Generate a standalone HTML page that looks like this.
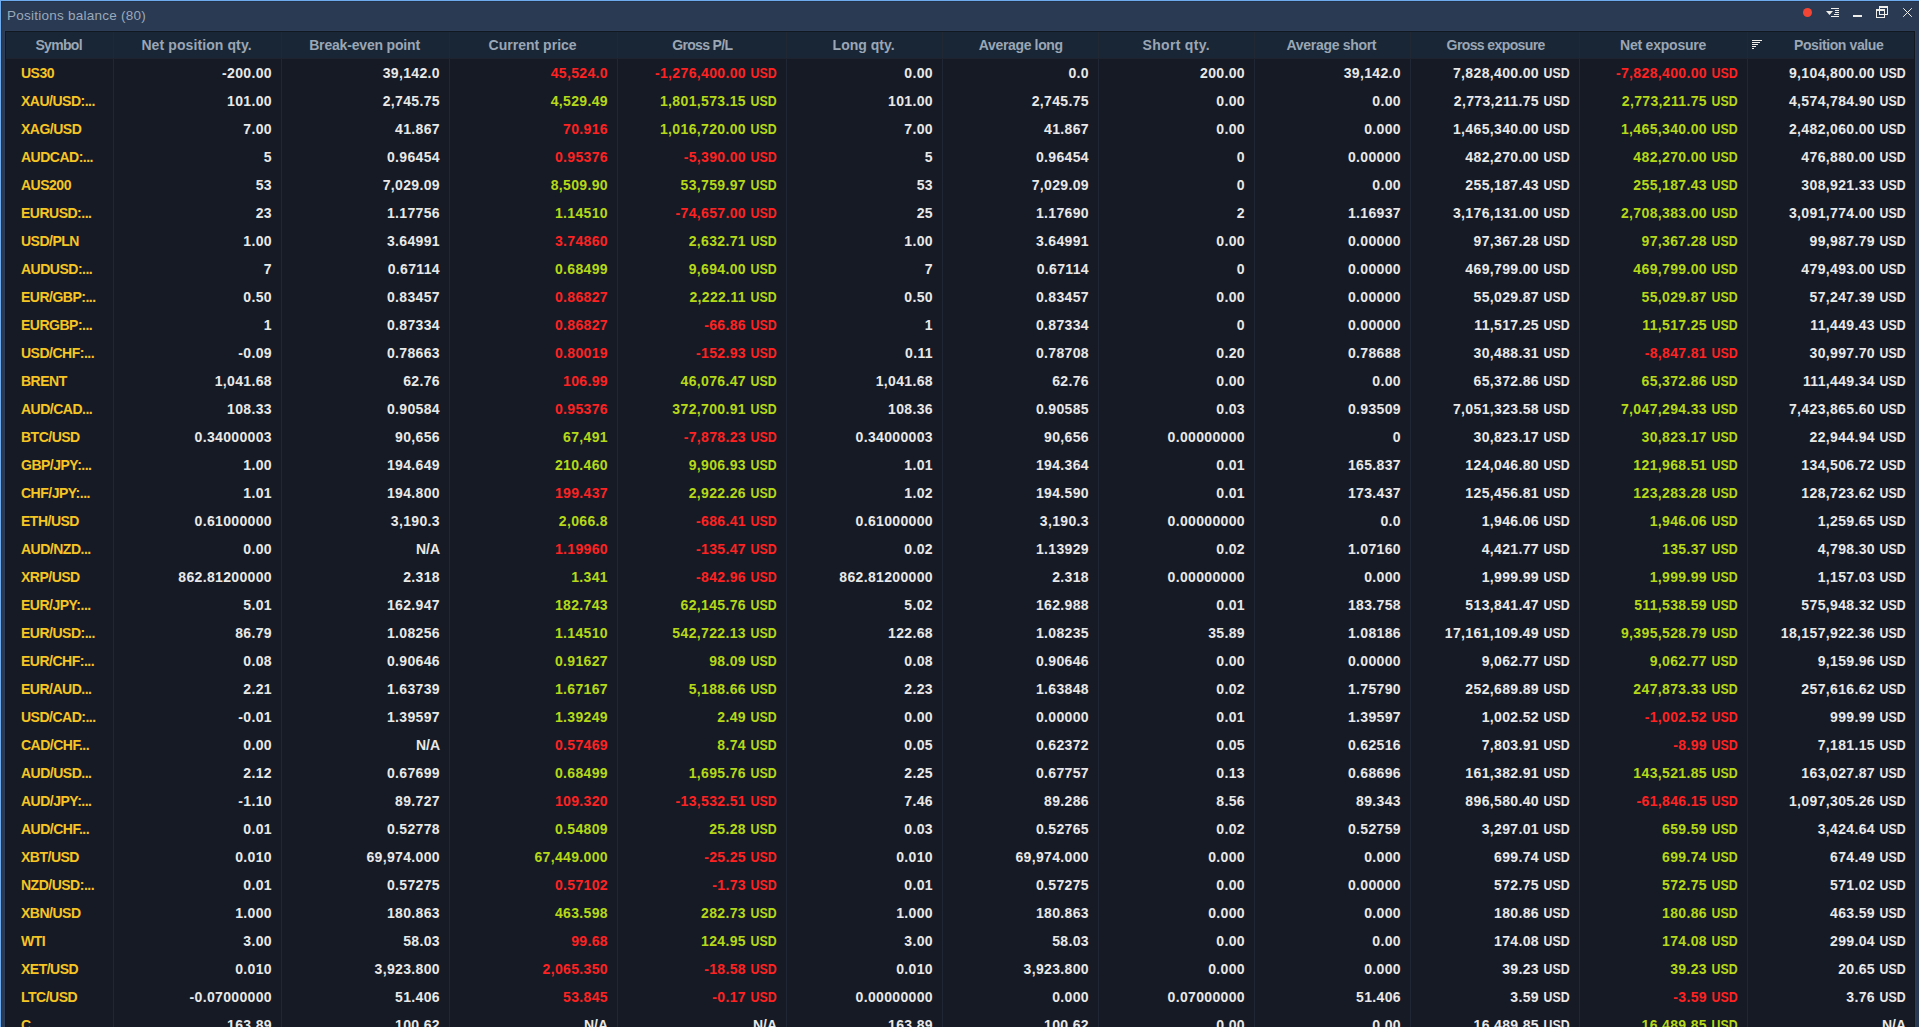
<!DOCTYPE html><html><head><meta charset="utf-8"><style>
*{margin:0;padding:0;box-sizing:border-box}
html,body{width:1919px;height:1027px;overflow:hidden;background:#2a3a52}
body{position:relative;font-family:"Liberation Sans",sans-serif}
.a{position:absolute}
.title{position:absolute;left:7px;top:7.6px;font-size:13.5px;line-height:16px;color:#9aa9bb;white-space:nowrap;letter-spacing:0.25px}
.sep{position:absolute;width:1px;top:59px;height:968px;background:#212634}
.hs{position:absolute;width:1px;top:32px;height:26px;background:#212733}
.h{position:absolute;top:32px;height:26px;line-height:26px;font-size:14px;font-weight:bold;color:#9ba6b5;white-space:nowrap}
.c{position:absolute;height:28px;line-height:28px;font-size:14px;letter-spacing:0.35px;font-weight:bold;color:#e8e8e8;white-space:nowrap;text-align:right}
.c i{font-style:normal;display:inline-block;font-size:14px;letter-spacing:0px;margin-left:1.5px;transform:scaleX(0.88);transform-origin:100% 50%}
.s{position:absolute;height:28px;line-height:28px;font-size:14px;letter-spacing:-0.5px;font-weight:bold;color:#f5c524;white-space:nowrap;left:21px}
.R{color:#ff2222}
.G{color:#b5d818}
</style></head><body><div class="a" style="left:0;top:0;width:1919px;height:1px;background:#6eaaee"></div><div class="a" style="left:0;top:0;width:1px;height:1027px;background:#6eaaee"></div><div class="a" style="left:1px;top:1px;width:1918px;height:1px;background:#24334a"></div><div class="a" style="left:1px;top:1px;width:1px;height:1026px;background:#24334a"></div><div class="title">Positions balance (80)</div><svg style='position:absolute;left:0;top:0' width='1919' height='30'><circle cx='1807.5' cy='12.5' r='4.5' fill='#f24535'/><g fill='#f0eeea'><rect x='1831' y='8' width='8' height='1'/><rect x='1835' y='10' width='4' height='1'/><rect x='1835' y='12' width='4' height='1'/><rect x='1834' y='14' width='5' height='1'/><rect x='1831' y='16' width='8' height='1'/><path d='M1826 11 L1833 11 L1829.5 15 Z'/><rect x='1853' y='15' width='9' height='2'/></g><g fill='none' stroke='#f0eeea'><rect x='1879.5' y='6.5' width='8' height='8'/><rect x='1876.5' y='9.5' width='8' height='8'/><path d='M1903.2 8.2 L1911.8 16.8 M1911.8 8.2 L1903.2 16.8' stroke-width='1'/></g><g fill='#f0eeea'><rect x='1879' y='6' width='9' height='2'/><rect x='1876' y='9' width='9' height='2'/></g></svg><div class="a" style="left:4px;top:30px;width:1912px;height:997px;background:#2d3d57"></div><div class="a" style="left:5px;top:31px;width:1910px;height:996px;background:#111820"></div><div class="a" style="left:6px;top:32px;width:1908px;height:26px;background:#182636"></div><div class="a" style="left:6px;top:58px;width:1908px;height:1px;background:#1f2330"></div><div class="a" style="left:6px;top:59px;width:1908px;height:968px;background:#151a25"></div><div class="sep" style="left:113px"></div><div class="sep" style="left:281px"></div><div class="sep" style="left:449px"></div><div class="sep" style="left:617px"></div><div class="sep" style="left:786px"></div><div class="sep" style="left:942px"></div><div class="sep" style="left:1098px"></div><div class="sep" style="left:1254px"></div><div class="sep" style="left:1410px"></div><div class="sep" style="left:1579px"></div><div class="sep" style="left:1747px"></div><div class="hs" style="left:113px"></div><div class="hs" style="left:281px"></div><div class="hs" style="left:449px"></div><div class="hs" style="left:617px"></div><div class="hs" style="left:786px"></div><div class="hs" style="left:942px"></div><div class="hs" style="left:1098px"></div><div class="hs" style="left:1254px"></div><div class="hs" style="left:1410px"></div><div class="hs" style="left:1579px"></div><div class="hs" style="left:1747px"></div><div class="h" style="left:35.4px;letter-spacing:-0.68px">Symbol</div><div class="h" style="left:141.4px;letter-spacing:0.1px">Net position qty.</div><div class="h" style="left:309.2px;letter-spacing:-0.18px">Break-even point</div><div class="h" style="left:488.6px;letter-spacing:0.01px">Current price</div><div class="h" style="left:672.2px;letter-spacing:-0.66px">Gross P/L</div><div class="h" style="left:832.6px;letter-spacing:0.02px">Long qty.</div><div class="h" style="left:978.8px;letter-spacing:-0.35px">Average long</div><div class="h" style="left:1142.6px;letter-spacing:0.3px">Short qty.</div><div class="h" style="left:1286.6px;letter-spacing:-0.31px">Average short</div><div class="h" style="left:1446.6px;letter-spacing:-0.6px">Gross exposure</div><div class="h" style="left:1620.0px;letter-spacing:-0.21px">Net exposure</div><div class="h" style="left:1794.0px;letter-spacing:-0.4px">Position value</div><svg style='position:absolute;left:1748px;top:36px' width='20' height='16'><g fill='#f0eeea'><rect x='4' y='4' width='10' height='1'/><rect x='4' y='6' width='8' height='1'/><rect x='4' y='8' width='6' height='1'/><rect x='4' y='10' width='4' height='1'/><rect x='4' y='12' width='2' height='1'/></g></svg><div class="s" style="top:59px">US30</div><div class="c" style="top:59px;right:1647px">-200.00</div><div class="c" style="top:59px;right:1479px">39,142.0</div><div class="c R" style="top:59px;right:1311px">45,524.0</div><div class="c R" style="top:59px;right:1142px">-1,276,400.00<i>USD</i></div><div class="c" style="top:59px;right:986px">0.00</div><div class="c" style="top:59px;right:830px">0.0</div><div class="c" style="top:59px;right:674px">200.00</div><div class="c" style="top:59px;right:518px">39,142.0</div><div class="c" style="top:59px;right:349px">7,828,400.00<i>USD</i></div><div class="c R" style="top:59px;right:181px">-7,828,400.00<i>USD</i></div><div class="c" style="top:59px;right:13px">9,104,800.00<i>USD</i></div><div class="s" style="top:87px">XAU/USD:...</div><div class="c" style="top:87px;right:1647px">101.00</div><div class="c" style="top:87px;right:1479px">2,745.75</div><div class="c G" style="top:87px;right:1311px">4,529.49</div><div class="c G" style="top:87px;right:1142px">1,801,573.15<i>USD</i></div><div class="c" style="top:87px;right:986px">101.00</div><div class="c" style="top:87px;right:830px">2,745.75</div><div class="c" style="top:87px;right:674px">0.00</div><div class="c" style="top:87px;right:518px">0.00</div><div class="c" style="top:87px;right:349px">2,773,211.75<i>USD</i></div><div class="c G" style="top:87px;right:181px">2,773,211.75<i>USD</i></div><div class="c" style="top:87px;right:13px">4,574,784.90<i>USD</i></div><div class="s" style="top:115px">XAG/USD</div><div class="c" style="top:115px;right:1647px">7.00</div><div class="c" style="top:115px;right:1479px">41.867</div><div class="c R" style="top:115px;right:1311px">70.916</div><div class="c G" style="top:115px;right:1142px">1,016,720.00<i>USD</i></div><div class="c" style="top:115px;right:986px">7.00</div><div class="c" style="top:115px;right:830px">41.867</div><div class="c" style="top:115px;right:674px">0.00</div><div class="c" style="top:115px;right:518px">0.000</div><div class="c" style="top:115px;right:349px">1,465,340.00<i>USD</i></div><div class="c G" style="top:115px;right:181px">1,465,340.00<i>USD</i></div><div class="c" style="top:115px;right:13px">2,482,060.00<i>USD</i></div><div class="s" style="top:143px">AUDCAD:...</div><div class="c" style="top:143px;right:1647px">5</div><div class="c" style="top:143px;right:1479px">0.96454</div><div class="c R" style="top:143px;right:1311px">0.95376</div><div class="c R" style="top:143px;right:1142px">-5,390.00<i>USD</i></div><div class="c" style="top:143px;right:986px">5</div><div class="c" style="top:143px;right:830px">0.96454</div><div class="c" style="top:143px;right:674px">0</div><div class="c" style="top:143px;right:518px">0.00000</div><div class="c" style="top:143px;right:349px">482,270.00<i>USD</i></div><div class="c G" style="top:143px;right:181px">482,270.00<i>USD</i></div><div class="c" style="top:143px;right:13px">476,880.00<i>USD</i></div><div class="s" style="top:171px">AUS200</div><div class="c" style="top:171px;right:1647px">53</div><div class="c" style="top:171px;right:1479px">7,029.09</div><div class="c G" style="top:171px;right:1311px">8,509.90</div><div class="c G" style="top:171px;right:1142px">53,759.97<i>USD</i></div><div class="c" style="top:171px;right:986px">53</div><div class="c" style="top:171px;right:830px">7,029.09</div><div class="c" style="top:171px;right:674px">0</div><div class="c" style="top:171px;right:518px">0.00</div><div class="c" style="top:171px;right:349px">255,187.43<i>USD</i></div><div class="c G" style="top:171px;right:181px">255,187.43<i>USD</i></div><div class="c" style="top:171px;right:13px">308,921.33<i>USD</i></div><div class="s" style="top:199px">EURUSD:...</div><div class="c" style="top:199px;right:1647px">23</div><div class="c" style="top:199px;right:1479px">1.17756</div><div class="c G" style="top:199px;right:1311px">1.14510</div><div class="c R" style="top:199px;right:1142px">-74,657.00<i>USD</i></div><div class="c" style="top:199px;right:986px">25</div><div class="c" style="top:199px;right:830px">1.17690</div><div class="c" style="top:199px;right:674px">2</div><div class="c" style="top:199px;right:518px">1.16937</div><div class="c" style="top:199px;right:349px">3,176,131.00<i>USD</i></div><div class="c G" style="top:199px;right:181px">2,708,383.00<i>USD</i></div><div class="c" style="top:199px;right:13px">3,091,774.00<i>USD</i></div><div class="s" style="top:227px">USD/PLN</div><div class="c" style="top:227px;right:1647px">1.00</div><div class="c" style="top:227px;right:1479px">3.64991</div><div class="c R" style="top:227px;right:1311px">3.74860</div><div class="c G" style="top:227px;right:1142px">2,632.71<i>USD</i></div><div class="c" style="top:227px;right:986px">1.00</div><div class="c" style="top:227px;right:830px">3.64991</div><div class="c" style="top:227px;right:674px">0.00</div><div class="c" style="top:227px;right:518px">0.00000</div><div class="c" style="top:227px;right:349px">97,367.28<i>USD</i></div><div class="c G" style="top:227px;right:181px">97,367.28<i>USD</i></div><div class="c" style="top:227px;right:13px">99,987.79<i>USD</i></div><div class="s" style="top:255px">AUDUSD:...</div><div class="c" style="top:255px;right:1647px">7</div><div class="c" style="top:255px;right:1479px">0.67114</div><div class="c G" style="top:255px;right:1311px">0.68499</div><div class="c G" style="top:255px;right:1142px">9,694.00<i>USD</i></div><div class="c" style="top:255px;right:986px">7</div><div class="c" style="top:255px;right:830px">0.67114</div><div class="c" style="top:255px;right:674px">0</div><div class="c" style="top:255px;right:518px">0.00000</div><div class="c" style="top:255px;right:349px">469,799.00<i>USD</i></div><div class="c G" style="top:255px;right:181px">469,799.00<i>USD</i></div><div class="c" style="top:255px;right:13px">479,493.00<i>USD</i></div><div class="s" style="top:283px">EUR/GBP:...</div><div class="c" style="top:283px;right:1647px">0.50</div><div class="c" style="top:283px;right:1479px">0.83457</div><div class="c R" style="top:283px;right:1311px">0.86827</div><div class="c G" style="top:283px;right:1142px">2,222.11<i>USD</i></div><div class="c" style="top:283px;right:986px">0.50</div><div class="c" style="top:283px;right:830px">0.83457</div><div class="c" style="top:283px;right:674px">0.00</div><div class="c" style="top:283px;right:518px">0.00000</div><div class="c" style="top:283px;right:349px">55,029.87<i>USD</i></div><div class="c G" style="top:283px;right:181px">55,029.87<i>USD</i></div><div class="c" style="top:283px;right:13px">57,247.39<i>USD</i></div><div class="s" style="top:311px">EURGBP:...</div><div class="c" style="top:311px;right:1647px">1</div><div class="c" style="top:311px;right:1479px">0.87334</div><div class="c R" style="top:311px;right:1311px">0.86827</div><div class="c R" style="top:311px;right:1142px">-66.86<i>USD</i></div><div class="c" style="top:311px;right:986px">1</div><div class="c" style="top:311px;right:830px">0.87334</div><div class="c" style="top:311px;right:674px">0</div><div class="c" style="top:311px;right:518px">0.00000</div><div class="c" style="top:311px;right:349px">11,517.25<i>USD</i></div><div class="c G" style="top:311px;right:181px">11,517.25<i>USD</i></div><div class="c" style="top:311px;right:13px">11,449.43<i>USD</i></div><div class="s" style="top:339px">USD/CHF:...</div><div class="c" style="top:339px;right:1647px">-0.09</div><div class="c" style="top:339px;right:1479px">0.78663</div><div class="c R" style="top:339px;right:1311px">0.80019</div><div class="c R" style="top:339px;right:1142px">-152.93<i>USD</i></div><div class="c" style="top:339px;right:986px">0.11</div><div class="c" style="top:339px;right:830px">0.78708</div><div class="c" style="top:339px;right:674px">0.20</div><div class="c" style="top:339px;right:518px">0.78688</div><div class="c" style="top:339px;right:349px">30,488.31<i>USD</i></div><div class="c R" style="top:339px;right:181px">-8,847.81<i>USD</i></div><div class="c" style="top:339px;right:13px">30,997.70<i>USD</i></div><div class="s" style="top:367px">BRENT</div><div class="c" style="top:367px;right:1647px">1,041.68</div><div class="c" style="top:367px;right:1479px">62.76</div><div class="c R" style="top:367px;right:1311px">106.99</div><div class="c G" style="top:367px;right:1142px">46,076.47<i>USD</i></div><div class="c" style="top:367px;right:986px">1,041.68</div><div class="c" style="top:367px;right:830px">62.76</div><div class="c" style="top:367px;right:674px">0.00</div><div class="c" style="top:367px;right:518px">0.00</div><div class="c" style="top:367px;right:349px">65,372.86<i>USD</i></div><div class="c G" style="top:367px;right:181px">65,372.86<i>USD</i></div><div class="c" style="top:367px;right:13px">111,449.34<i>USD</i></div><div class="s" style="top:395px">AUD/CAD...</div><div class="c" style="top:395px;right:1647px">108.33</div><div class="c" style="top:395px;right:1479px">0.90584</div><div class="c R" style="top:395px;right:1311px">0.95376</div><div class="c G" style="top:395px;right:1142px">372,700.91<i>USD</i></div><div class="c" style="top:395px;right:986px">108.36</div><div class="c" style="top:395px;right:830px">0.90585</div><div class="c" style="top:395px;right:674px">0.03</div><div class="c" style="top:395px;right:518px">0.93509</div><div class="c" style="top:395px;right:349px">7,051,323.58<i>USD</i></div><div class="c G" style="top:395px;right:181px">7,047,294.33<i>USD</i></div><div class="c" style="top:395px;right:13px">7,423,865.60<i>USD</i></div><div class="s" style="top:423px">BTC/USD</div><div class="c" style="top:423px;right:1647px">0.34000003</div><div class="c" style="top:423px;right:1479px">90,656</div><div class="c G" style="top:423px;right:1311px">67,491</div><div class="c R" style="top:423px;right:1142px">-7,878.23<i>USD</i></div><div class="c" style="top:423px;right:986px">0.34000003</div><div class="c" style="top:423px;right:830px">90,656</div><div class="c" style="top:423px;right:674px">0.00000000</div><div class="c" style="top:423px;right:518px">0</div><div class="c" style="top:423px;right:349px">30,823.17<i>USD</i></div><div class="c G" style="top:423px;right:181px">30,823.17<i>USD</i></div><div class="c" style="top:423px;right:13px">22,944.94<i>USD</i></div><div class="s" style="top:451px">GBP/JPY:...</div><div class="c" style="top:451px;right:1647px">1.00</div><div class="c" style="top:451px;right:1479px">194.649</div><div class="c G" style="top:451px;right:1311px">210.460</div><div class="c G" style="top:451px;right:1142px">9,906.93<i>USD</i></div><div class="c" style="top:451px;right:986px">1.01</div><div class="c" style="top:451px;right:830px">194.364</div><div class="c" style="top:451px;right:674px">0.01</div><div class="c" style="top:451px;right:518px">165.837</div><div class="c" style="top:451px;right:349px">124,046.80<i>USD</i></div><div class="c G" style="top:451px;right:181px">121,968.51<i>USD</i></div><div class="c" style="top:451px;right:13px">134,506.72<i>USD</i></div><div class="s" style="top:479px">CHF/JPY:...</div><div class="c" style="top:479px;right:1647px">1.01</div><div class="c" style="top:479px;right:1479px">194.800</div><div class="c R" style="top:479px;right:1311px">199.437</div><div class="c G" style="top:479px;right:1142px">2,922.26<i>USD</i></div><div class="c" style="top:479px;right:986px">1.02</div><div class="c" style="top:479px;right:830px">194.590</div><div class="c" style="top:479px;right:674px">0.01</div><div class="c" style="top:479px;right:518px">173.437</div><div class="c" style="top:479px;right:349px">125,456.81<i>USD</i></div><div class="c G" style="top:479px;right:181px">123,283.28<i>USD</i></div><div class="c" style="top:479px;right:13px">128,723.62<i>USD</i></div><div class="s" style="top:507px">ETH/USD</div><div class="c" style="top:507px;right:1647px">0.61000000</div><div class="c" style="top:507px;right:1479px">3,190.3</div><div class="c G" style="top:507px;right:1311px">2,066.8</div><div class="c R" style="top:507px;right:1142px">-686.41<i>USD</i></div><div class="c" style="top:507px;right:986px">0.61000000</div><div class="c" style="top:507px;right:830px">3,190.3</div><div class="c" style="top:507px;right:674px">0.00000000</div><div class="c" style="top:507px;right:518px">0.0</div><div class="c" style="top:507px;right:349px">1,946.06<i>USD</i></div><div class="c G" style="top:507px;right:181px">1,946.06<i>USD</i></div><div class="c" style="top:507px;right:13px">1,259.65<i>USD</i></div><div class="s" style="top:535px">AUD/NZD...</div><div class="c" style="top:535px;right:1647px">0.00</div><div class="c" style="letter-spacing:0;top:535px;right:1479px">N/A</div><div class="c R" style="top:535px;right:1311px">1.19960</div><div class="c R" style="top:535px;right:1142px">-135.47<i>USD</i></div><div class="c" style="top:535px;right:986px">0.02</div><div class="c" style="top:535px;right:830px">1.13929</div><div class="c" style="top:535px;right:674px">0.02</div><div class="c" style="top:535px;right:518px">1.07160</div><div class="c" style="top:535px;right:349px">4,421.77<i>USD</i></div><div class="c G" style="top:535px;right:181px">135.37<i>USD</i></div><div class="c" style="top:535px;right:13px">4,798.30<i>USD</i></div><div class="s" style="top:563px">XRP/USD</div><div class="c" style="top:563px;right:1647px">862.81200000</div><div class="c" style="top:563px;right:1479px">2.318</div><div class="c G" style="top:563px;right:1311px">1.341</div><div class="c R" style="top:563px;right:1142px">-842.96<i>USD</i></div><div class="c" style="top:563px;right:986px">862.81200000</div><div class="c" style="top:563px;right:830px">2.318</div><div class="c" style="top:563px;right:674px">0.00000000</div><div class="c" style="top:563px;right:518px">0.000</div><div class="c" style="top:563px;right:349px">1,999.99<i>USD</i></div><div class="c G" style="top:563px;right:181px">1,999.99<i>USD</i></div><div class="c" style="top:563px;right:13px">1,157.03<i>USD</i></div><div class="s" style="top:591px">EUR/JPY:...</div><div class="c" style="top:591px;right:1647px">5.01</div><div class="c" style="top:591px;right:1479px">162.947</div><div class="c G" style="top:591px;right:1311px">182.743</div><div class="c G" style="top:591px;right:1142px">62,145.76<i>USD</i></div><div class="c" style="top:591px;right:986px">5.02</div><div class="c" style="top:591px;right:830px">162.988</div><div class="c" style="top:591px;right:674px">0.01</div><div class="c" style="top:591px;right:518px">183.758</div><div class="c" style="top:591px;right:349px">513,841.47<i>USD</i></div><div class="c G" style="top:591px;right:181px">511,538.59<i>USD</i></div><div class="c" style="top:591px;right:13px">575,948.32<i>USD</i></div><div class="s" style="top:619px">EUR/USD:...</div><div class="c" style="top:619px;right:1647px">86.79</div><div class="c" style="top:619px;right:1479px">1.08256</div><div class="c G" style="top:619px;right:1311px">1.14510</div><div class="c G" style="top:619px;right:1142px">542,722.13<i>USD</i></div><div class="c" style="top:619px;right:986px">122.68</div><div class="c" style="top:619px;right:830px">1.08235</div><div class="c" style="top:619px;right:674px">35.89</div><div class="c" style="top:619px;right:518px">1.08186</div><div class="c" style="top:619px;right:349px">17,161,109.49<i>USD</i></div><div class="c G" style="top:619px;right:181px">9,395,528.79<i>USD</i></div><div class="c" style="top:619px;right:13px">18,157,922.36<i>USD</i></div><div class="s" style="top:647px">EUR/CHF:...</div><div class="c" style="top:647px;right:1647px">0.08</div><div class="c" style="top:647px;right:1479px">0.90646</div><div class="c G" style="top:647px;right:1311px">0.91627</div><div class="c G" style="top:647px;right:1142px">98.09<i>USD</i></div><div class="c" style="top:647px;right:986px">0.08</div><div class="c" style="top:647px;right:830px">0.90646</div><div class="c" style="top:647px;right:674px">0.00</div><div class="c" style="top:647px;right:518px">0.00000</div><div class="c" style="top:647px;right:349px">9,062.77<i>USD</i></div><div class="c G" style="top:647px;right:181px">9,062.77<i>USD</i></div><div class="c" style="top:647px;right:13px">9,159.96<i>USD</i></div><div class="s" style="top:675px">EUR/AUD...</div><div class="c" style="top:675px;right:1647px">2.21</div><div class="c" style="top:675px;right:1479px">1.63739</div><div class="c G" style="top:675px;right:1311px">1.67167</div><div class="c G" style="top:675px;right:1142px">5,188.66<i>USD</i></div><div class="c" style="top:675px;right:986px">2.23</div><div class="c" style="top:675px;right:830px">1.63848</div><div class="c" style="top:675px;right:674px">0.02</div><div class="c" style="top:675px;right:518px">1.75790</div><div class="c" style="top:675px;right:349px">252,689.89<i>USD</i></div><div class="c G" style="top:675px;right:181px">247,873.33<i>USD</i></div><div class="c" style="top:675px;right:13px">257,616.62<i>USD</i></div><div class="s" style="top:703px">USD/CAD:...</div><div class="c" style="top:703px;right:1647px">-0.01</div><div class="c" style="top:703px;right:1479px">1.39597</div><div class="c G" style="top:703px;right:1311px">1.39249</div><div class="c G" style="top:703px;right:1142px">2.49<i>USD</i></div><div class="c" style="top:703px;right:986px">0.00</div><div class="c" style="top:703px;right:830px">0.00000</div><div class="c" style="top:703px;right:674px">0.01</div><div class="c" style="top:703px;right:518px">1.39597</div><div class="c" style="top:703px;right:349px">1,002.52<i>USD</i></div><div class="c R" style="top:703px;right:181px">-1,002.52<i>USD</i></div><div class="c" style="top:703px;right:13px">999.99<i>USD</i></div><div class="s" style="top:731px">CAD/CHF...</div><div class="c" style="top:731px;right:1647px">0.00</div><div class="c" style="letter-spacing:0;top:731px;right:1479px">N/A</div><div class="c R" style="top:731px;right:1311px">0.57469</div><div class="c G" style="top:731px;right:1142px">8.74<i>USD</i></div><div class="c" style="top:731px;right:986px">0.05</div><div class="c" style="top:731px;right:830px">0.62372</div><div class="c" style="top:731px;right:674px">0.05</div><div class="c" style="top:731px;right:518px">0.62516</div><div class="c" style="top:731px;right:349px">7,803.91<i>USD</i></div><div class="c R" style="top:731px;right:181px">-8.99<i>USD</i></div><div class="c" style="top:731px;right:13px">7,181.15<i>USD</i></div><div class="s" style="top:759px">AUD/USD...</div><div class="c" style="top:759px;right:1647px">2.12</div><div class="c" style="top:759px;right:1479px">0.67699</div><div class="c G" style="top:759px;right:1311px">0.68499</div><div class="c G" style="top:759px;right:1142px">1,695.76<i>USD</i></div><div class="c" style="top:759px;right:986px">2.25</div><div class="c" style="top:759px;right:830px">0.67757</div><div class="c" style="top:759px;right:674px">0.13</div><div class="c" style="top:759px;right:518px">0.68696</div><div class="c" style="top:759px;right:349px">161,382.91<i>USD</i></div><div class="c G" style="top:759px;right:181px">143,521.85<i>USD</i></div><div class="c" style="top:759px;right:13px">163,027.87<i>USD</i></div><div class="s" style="top:787px">AUD/JPY:...</div><div class="c" style="top:787px;right:1647px">-1.10</div><div class="c" style="top:787px;right:1479px">89.727</div><div class="c R" style="top:787px;right:1311px">109.320</div><div class="c R" style="top:787px;right:1142px">-13,532.51<i>USD</i></div><div class="c" style="top:787px;right:986px">7.46</div><div class="c" style="top:787px;right:830px">89.286</div><div class="c" style="top:787px;right:674px">8.56</div><div class="c" style="top:787px;right:518px">89.343</div><div class="c" style="top:787px;right:349px">896,580.40<i>USD</i></div><div class="c R" style="top:787px;right:181px">-61,846.15<i>USD</i></div><div class="c" style="top:787px;right:13px">1,097,305.26<i>USD</i></div><div class="s" style="top:815px">AUD/CHF...</div><div class="c" style="top:815px;right:1647px">0.01</div><div class="c" style="top:815px;right:1479px">0.52778</div><div class="c G" style="top:815px;right:1311px">0.54809</div><div class="c G" style="top:815px;right:1142px">25.28<i>USD</i></div><div class="c" style="top:815px;right:986px">0.03</div><div class="c" style="top:815px;right:830px">0.52765</div><div class="c" style="top:815px;right:674px">0.02</div><div class="c" style="top:815px;right:518px">0.52759</div><div class="c" style="top:815px;right:349px">3,297.01<i>USD</i></div><div class="c G" style="top:815px;right:181px">659.59<i>USD</i></div><div class="c" style="top:815px;right:13px">3,424.64<i>USD</i></div><div class="s" style="top:843px">XBT/USD</div><div class="c" style="top:843px;right:1647px">0.010</div><div class="c" style="top:843px;right:1479px">69,974.000</div><div class="c G" style="top:843px;right:1311px">67,449.000</div><div class="c R" style="top:843px;right:1142px">-25.25<i>USD</i></div><div class="c" style="top:843px;right:986px">0.010</div><div class="c" style="top:843px;right:830px">69,974.000</div><div class="c" style="top:843px;right:674px">0.000</div><div class="c" style="top:843px;right:518px">0.000</div><div class="c" style="top:843px;right:349px">699.74<i>USD</i></div><div class="c G" style="top:843px;right:181px">699.74<i>USD</i></div><div class="c" style="top:843px;right:13px">674.49<i>USD</i></div><div class="s" style="top:871px">NZD/USD:...</div><div class="c" style="top:871px;right:1647px">0.01</div><div class="c" style="top:871px;right:1479px">0.57275</div><div class="c R" style="top:871px;right:1311px">0.57102</div><div class="c R" style="top:871px;right:1142px">-1.73<i>USD</i></div><div class="c" style="top:871px;right:986px">0.01</div><div class="c" style="top:871px;right:830px">0.57275</div><div class="c" style="top:871px;right:674px">0.00</div><div class="c" style="top:871px;right:518px">0.00000</div><div class="c" style="top:871px;right:349px">572.75<i>USD</i></div><div class="c G" style="top:871px;right:181px">572.75<i>USD</i></div><div class="c" style="top:871px;right:13px">571.02<i>USD</i></div><div class="s" style="top:899px">XBN/USD</div><div class="c" style="top:899px;right:1647px">1.000</div><div class="c" style="top:899px;right:1479px">180.863</div><div class="c G" style="top:899px;right:1311px">463.598</div><div class="c G" style="top:899px;right:1142px">282.73<i>USD</i></div><div class="c" style="top:899px;right:986px">1.000</div><div class="c" style="top:899px;right:830px">180.863</div><div class="c" style="top:899px;right:674px">0.000</div><div class="c" style="top:899px;right:518px">0.000</div><div class="c" style="top:899px;right:349px">180.86<i>USD</i></div><div class="c G" style="top:899px;right:181px">180.86<i>USD</i></div><div class="c" style="top:899px;right:13px">463.59<i>USD</i></div><div class="s" style="top:927px">WTI</div><div class="c" style="top:927px;right:1647px">3.00</div><div class="c" style="top:927px;right:1479px">58.03</div><div class="c R" style="top:927px;right:1311px">99.68</div><div class="c G" style="top:927px;right:1142px">124.95<i>USD</i></div><div class="c" style="top:927px;right:986px">3.00</div><div class="c" style="top:927px;right:830px">58.03</div><div class="c" style="top:927px;right:674px">0.00</div><div class="c" style="top:927px;right:518px">0.00</div><div class="c" style="top:927px;right:349px">174.08<i>USD</i></div><div class="c G" style="top:927px;right:181px">174.08<i>USD</i></div><div class="c" style="top:927px;right:13px">299.04<i>USD</i></div><div class="s" style="top:955px">XET/USD</div><div class="c" style="top:955px;right:1647px">0.010</div><div class="c" style="top:955px;right:1479px">3,923.800</div><div class="c R" style="top:955px;right:1311px">2,065.350</div><div class="c R" style="top:955px;right:1142px">-18.58<i>USD</i></div><div class="c" style="top:955px;right:986px">0.010</div><div class="c" style="top:955px;right:830px">3,923.800</div><div class="c" style="top:955px;right:674px">0.000</div><div class="c" style="top:955px;right:518px">0.000</div><div class="c" style="top:955px;right:349px">39.23<i>USD</i></div><div class="c G" style="top:955px;right:181px">39.23<i>USD</i></div><div class="c" style="top:955px;right:13px">20.65<i>USD</i></div><div class="s" style="top:983px">LTC/USD</div><div class="c" style="top:983px;right:1647px">-0.07000000</div><div class="c" style="top:983px;right:1479px">51.406</div><div class="c R" style="top:983px;right:1311px">53.845</div><div class="c R" style="top:983px;right:1142px">-0.17<i>USD</i></div><div class="c" style="top:983px;right:986px">0.00000000</div><div class="c" style="top:983px;right:830px">0.000</div><div class="c" style="top:983px;right:674px">0.07000000</div><div class="c" style="top:983px;right:518px">51.406</div><div class="c" style="top:983px;right:349px">3.59<i>USD</i></div><div class="c R" style="top:983px;right:181px">-3.59<i>USD</i></div><div class="c" style="top:983px;right:13px">3.76<i>USD</i></div><div class="s" style="top:1011px">C...</div><div class="c" style="top:1011px;right:1647px">163.89</div><div class="c" style="top:1011px;right:1479px">100.62</div><div class="c" style="letter-spacing:0;top:1011px;right:1311px">N/A</div><div class="c" style="letter-spacing:0;top:1011px;right:1142px">N/A</div><div class="c" style="top:1011px;right:986px">163.89</div><div class="c" style="top:1011px;right:830px">100.62</div><div class="c" style="top:1011px;right:674px">0.00</div><div class="c" style="top:1011px;right:518px">0.00</div><div class="c" style="top:1011px;right:349px">16,489.85<i>USD</i></div><div class="c G" style="top:1011px;right:181px">16,489.85<i>USD</i></div><div class="c" style="letter-spacing:0;top:1011px;right:13px">N/A</div></body></html>
